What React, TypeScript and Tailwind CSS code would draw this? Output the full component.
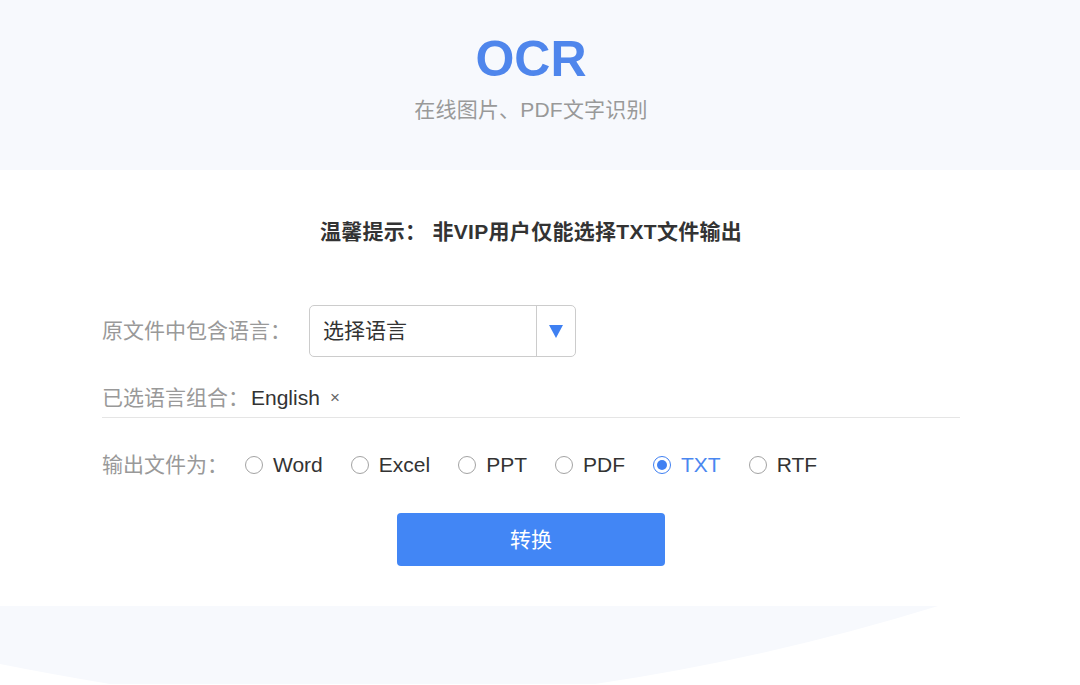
import React, { useState } from 'react';

const FONT = "font-['Liberation_Sans','Noto_Sans_CJK_SC',sans-serif]";

const formats = ['Word', 'Excel', 'PPT', 'PDF', 'TXT', 'RTF'];

const Radio: React.FC<{ label: string; checked: boolean; onSelect: () => void }> = ({ label, checked, onSelect }) => (
  <label className="flex cursor-pointer items-center" onClick={onSelect}>
    {checked ? (
      <span className="flex h-[18px] w-[18px] items-center justify-center rounded-full border-[1.5px] border-[#3f80f2] bg-white">
        <span className="h-[10px] w-[10px] rounded-full bg-[#3f80f2]" />
      </span>
    ) : (
      <span className="h-[18px] w-[18px] rounded-full border-[1.5px] border-[#a3a3a3] bg-white" />
    )}
    <span className={`ml-[10px] text-[21px] ${checked ? 'text-[#4a87f0]' : 'text-[#333]'}`}>{label}</span>
  </label>
);

export default function App() {
  const [format, setFormat] = useState('TXT');
  const [langs, setLangs] = useState<string[]>(['English']);

  return (
    <div className={`min-h-[685px] bg-white ${FONT}`}>
      {/* header */}
      <div className="h-[170px] bg-[#f7f9fd]">
        <div className="flex w-[1062px] flex-col items-center pt-[34px]">
          <h1 className="text-[50px] font-bold leading-none text-[#4f86ec]">OCR</h1>
          <p className="mt-[12px] text-[21px] leading-[28px] tracking-[0.2px] text-[#999]">在线图片、PDF文字识别</p>
        </div>
      </div>

      <div className="w-[1062px]">
        <p className="mt-[49px] text-center text-[21px] font-bold leading-[26px] tracking-[0.3px] text-[#333]">
          温馨提示：&nbsp;非VIP用户仅能选择TXT文件输出
        </p>

        <div className="ml-[102px] w-[858px]">
          {/* language select */}
          <div className="mt-[60px] flex items-center">
            <span className="text-[21px] text-[#999]">原文件中包含语言：</span>
            <div className="ml-[18px] flex h-[52px] w-[267px] items-stretch rounded-[5px] border border-[#cccccc] bg-white">
              <span className="flex flex-1 items-center pl-[13px] text-[21px] text-[#333]">选择语言</span>
              <span className="flex w-[39px] items-center justify-center border-l border-[#cccccc]">
                <svg width="14" height="13" viewBox="0 0 14 13">
                  <path d="M0 0 H14 L7 13 Z" fill="#3f80f2" />
                </svg>
              </span>
            </div>
          </div>

          {/* selected languages */}
          <div className="mt-[21px] flex h-[40px] items-center border-b border-[#e5e5e5]">
            <span className="text-[21px] text-[#999]">已选语言组合：</span>
            <div className="ml-[2px] flex items-center gap-3">
              {langs.map((l) => (
                <span key={l} className="flex items-center text-[21px] text-[#333]">
                  {l}
                  <button
                    className="ml-[10px] text-[17px] leading-none text-[#666]"
                    onClick={() => setLangs(langs.filter((x) => x !== l))}
                  >
                    ×
                  </button>
                </span>
              ))}
            </div>
          </div>

          {/* output format */}
          <div className="mt-[33px] flex h-[28px] items-center">
            <span className="text-[21px] text-[#999]">输出文件为：</span>
            <div className="ml-[17px] flex items-center gap-[28px]">
              {formats.map((f) => (
                <Radio key={f} label={f} checked={format === f} onSelect={() => setFormat(f)} />
              ))}
            </div>
          </div>
        </div>

        <div className="mt-[34px] flex justify-center">
          <button className="h-[53px] w-[268px] rounded-[4px] bg-[#4286f5] text-[21px] text-white">转换</button>
        </div>
      </div>

      {/* bottom decoration */}
      <svg className="mt-[40px] block" width="1080" height="78" viewBox="0 0 1080 78">
        <path d="M0 0 H938 Q770 52 595 78 H110 Q50 68 0 58 Z" fill="#f7f9fd" />
      </svg>
    </div>
  );
}
